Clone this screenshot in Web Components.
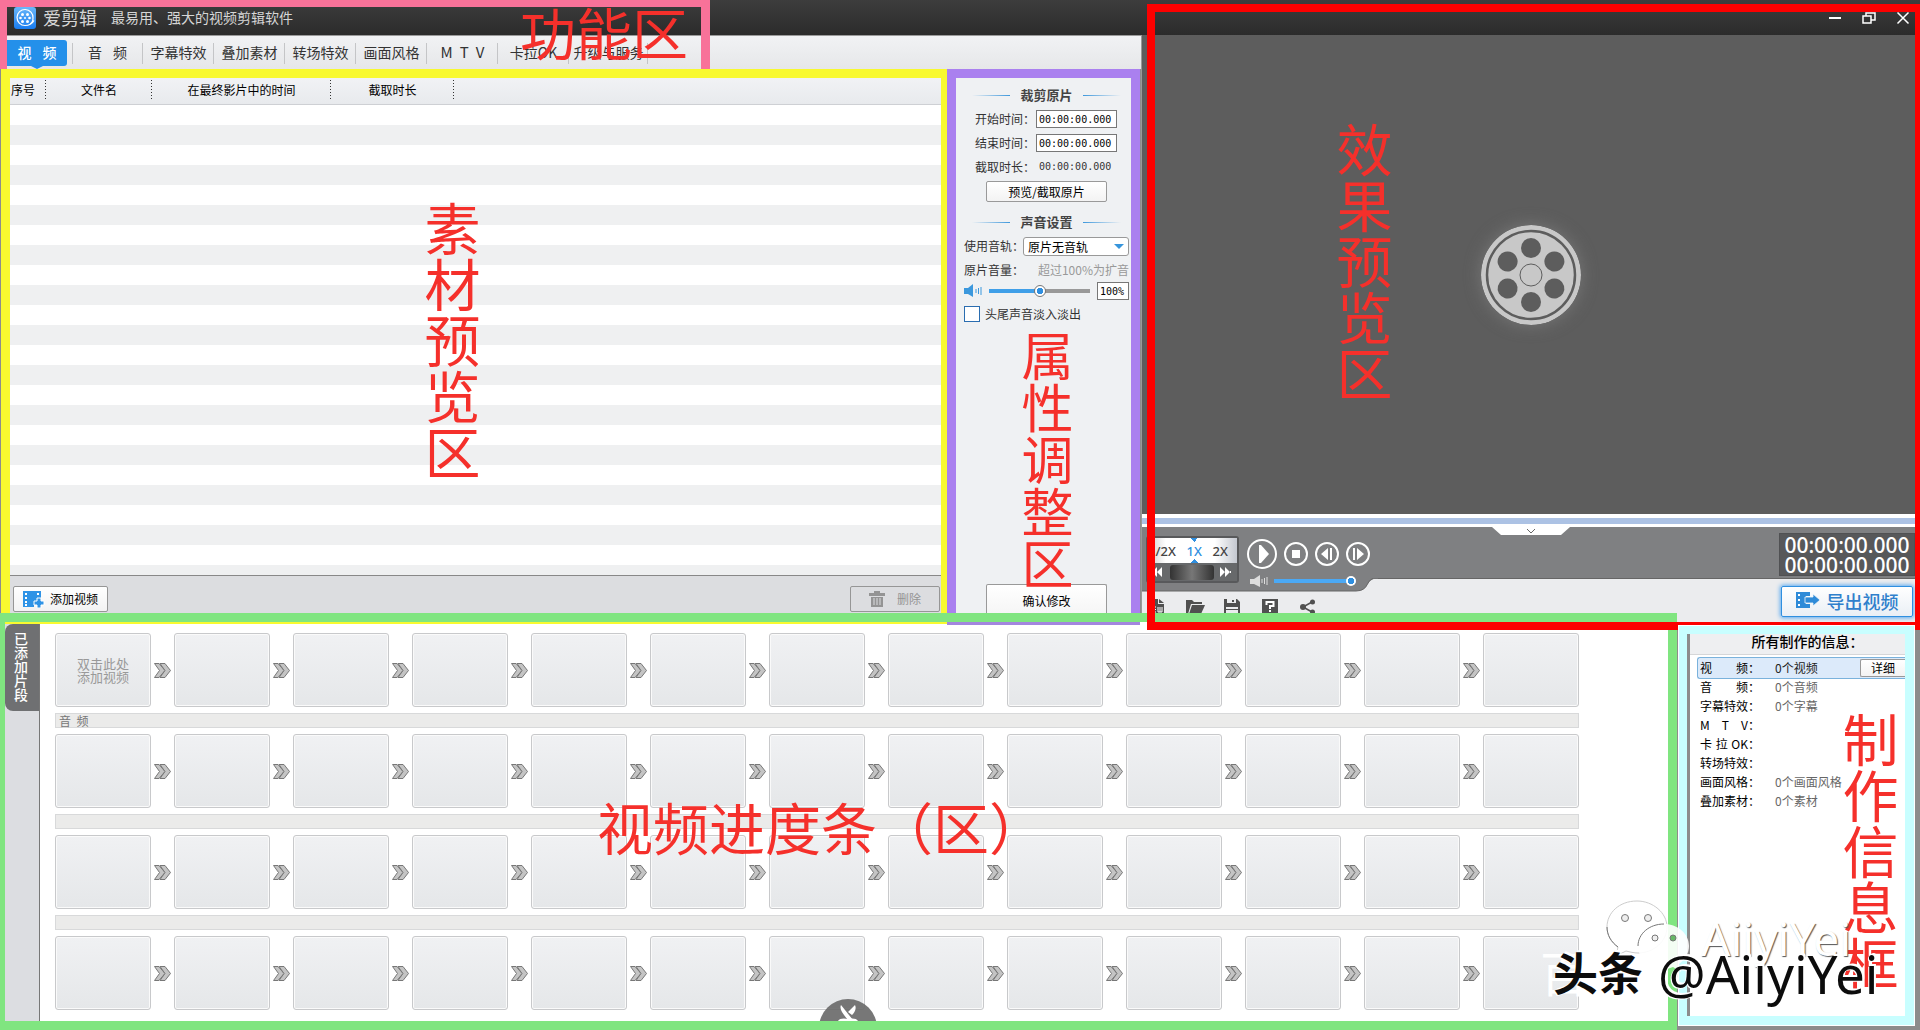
<!DOCTYPE html>
<html lang="zh-CN">
<head>
<meta charset="UTF-8">
<meta name="viewport" content="width=device-width, initial-scale=1.0">
<title>爱剪辑</title>
<style>
    body {
        margin: 0;
        background: #8c8c8c;
        font-family: "Noto Sans CJK SC", sans-serif;
        font-size: 12px;
        line-height: 18px;
        color: #000;
        overflow: hidden;
    }
</style>
</head>
<body>
<editor-app></editor-app>

<script>
class BaseElement extends HTMLElement {
    constructor() {
        super();
        this.myRoot = this.attachShadow({ mode: "open" });
        this.myRoot.innerHTML = `
        <style>
            * {
                box-sizing: border-box;
            }
            button, input, select {
                font: inherit;
                color: inherit;
                margin: 0;
            }
            svg {
                display: block;
            }
        </style>
        ${this.render()}`;
    }
}

// coloured note written over a part of the window
class NoteLabel extends BaseElement {
    render() {
        return `
        <slot></slot>
        <style>
            :host {
                position: absolute;
                z-index: 8;
                font-size: 56px;
                line-height: 56px;
                color: #f5302b;
                white-space: nowrap;
                pointer-events: none;
            }
            :host([vertical]) {
                writing-mode: vertical-rl;
            }
        </style>`;
    }
}

class NoteFrame extends BaseElement {
    render() {
        return `
        <style>
            :host {
                position: absolute;
                z-index: 5;
                box-sizing: border-box;
                border: 0 solid;
                pointer-events: none;
            }
        </style>`;
    }
}

class TitleBar extends BaseElement {
    render() {
        return `
        <svg class="logo" width="22" height="22" viewBox="0 0 22 22">
            <defs><linearGradient id="lg" x2="0" y2="1"><stop stop-color="#6ab8fa"/><stop offset="1" stop-color="#1a7df0"/></linearGradient></defs>
            <rect width="22" height="22" rx="3" fill="url(#lg)"/>
            <path d="M20 13.500C18 17 15 18.500 11 18.500A8 8 0 1 1 19 11C19 14 18 16 16 17" fill="none" stroke="#fff" stroke-width="1.200"/>
            <g fill="#fff"><circle cx="8.500" cy="7.500" r="1.500"/><circle cx="13.500" cy="7.500" r="1.500"/><circle cx="6.500" cy="11" r="1.300"/><circle cx="15.500" cy="11" r="1.300"/><circle cx="11" cy="11" r="1"/><circle cx="8.500" cy="14.500" r="1.500"/><circle cx="13.500" cy="14.500" r="1.500"/></g>
        </svg>
        <h1>爱剪辑</h1>
        <span>最易用、强大的视频剪辑软件</span>
        <nav>
            <button aria-label="最小化"><svg width="14" height="14"><path d="M1 7h12" stroke="#fff" stroke-width="2"/></svg></button>
            <button aria-label="还原"><svg width="14" height="14" fill="none" stroke="#fff" stroke-width="1.500"><path d="M1 5h8v7H1zM4 5V2h9v7H9"/></svg></button>
            <button aria-label="关闭"><svg width="14" height="14"><path d="M1.500 1.500l11 11M12.500 1.500l-11 11" stroke="#fff" stroke-width="1.500"/></svg></button>
        </nav>
        <style>
            :host {
                display: flex;
                align-items: center;
                height: 35px;
                padding: 0 10px 0 14px;
                box-sizing: border-box;
                background: linear-gradient(#3d3d3d, #2b2b2b);
                color: #d6d6d6;
            }
            h1 {
                margin: 0 14px 2px 7px;
                font-size: 18px;
                font-weight: 400;
            }
            span {
                margin-bottom: 2px;
                font-size: 14px;
            }
            nav {
                display: flex;
                gap: 20px;
                margin-left: auto;
            }
            nav button {
                padding: 0;
                border: 0;
                background: none;
            }
        </style>`;
    }
}

class FeatureTabs extends BaseElement {
    render() {
        const tabs = ["视 频", "音 频", "字幕特效", "叠加素材", "转场特效", "画面风格", "M T V", "卡拉OK", "升级与服务"];
        return `
        ${tabs.map((tab, i) => `<button class="${i ? "" : "active"}">${tab.split(" ").map(t => `<span>${t}</span>`).join(" ")}</button>`).join("")}
        <style>
            :host {
                display: flex;
                height: 34px;
                padding: 4px 0 3px 7px;
                box-sizing: border-box;
                border-top: 1px solid #9a9a9a;
                background: linear-gradient(#f1f2f4, #e6e7e9);
                color: #333;
            }
            button {
                display: flex;
                align-items: center;
                justify-content: center;
                gap: 11px;
                width: 71px;
                padding: 0 0 2px;
                border: 0;
                background: linear-gradient(#c4c5c7, #c4c5c7) right / 1px 21px no-repeat;
                font-size: 14px;
                white-space: nowrap;
            }
            button:nth-of-type(7) {
                gap: 7px;
                font-size: 15px;
            }
            button:last-of-type {
                width: 79px;
            }
            .active {
                position: relative;
                width: 60px;
                margin-right: 5px;
                border-radius: 0 3px 3px 0;
                background: #2490ea;
                color: #fff;
                font-weight: 500;
            }
            .active + button {
                background:
                    linear-gradient(#c4c5c7, #c4c5c7) left / 1px 21px no-repeat,
                    linear-gradient(#c4c5c7, #c4c5c7) right / 1px 21px no-repeat;
            }
            .active::after {
                content: "";
                position: absolute;
                bottom: -3px;
                border: 6px solid transparent;
                border-top: 3px solid #2490ea;
                border-bottom: 0;
            }
        </style>`;
    }
}

class MaterialList extends BaseElement {
    render() {
        return `
        <table>
            <colgroup><col class="no"><col class="name"><col class="time"><col class="cut"><col></colgroup>
            <thead><tr><th>序号</th><th>文件名</th><th>在最终影片中的时间</th><th>截取时长</th><th></th></tr></thead>
        </table>
        <div class="rows"></div>
        <footer>
            <button>
                <svg width="22" height="17" viewBox="0 0 22 17"><path d="M0 0h18v8h-4v3h-3v5H0z" fill="#2f93e6"/><path d="M2 2h2v2H2zM2 6h2v2H2zM2 10h2v2H2zM14 2h2v2h-2zM2 13h2v2H2z" fill="#fff"/><path d="M14 7h4v3h3v4h-3v3h-4v-3h-3v-4h3z" fill="#2f93e6" stroke="#fff"/></svg>
                添加视频
            </button>
            <button disabled>
                <svg width="16" height="17" viewBox="0 0 16 17" fill="#949494"><path d="M5 0h6v2h5v3H0V2h5zM2 6h12v10H2z"/><path d="M5 7v7M8 7v7M11 7v7" stroke="#dcdde0"/></svg>
                删除
            </button>
        </footer>
        <style>
            :host {
                display: flex;
                flex-direction: column;
                box-sizing: border-box;
                border: solid #f8f92f;
                border-width: 9px 6px 0 9px;
                margin-left: 1px;
            }
            table {
                width: 100%;
                table-layout: fixed;
                border-spacing: 0;
                border-bottom: 1px solid #ced0d4;
                background: linear-gradient(#f1f2f5, #e8eaed);
            }
            .no { width: 36px; }
            .name { width: 106px; }
            .time { width: 179px; }
            .cut { width: 123px; }
            th {
                height: 26px;
                padding: 0 0 2px;
                font-weight: 400;
                white-space: nowrap;
            }
            th:first-child {
                padding-left: 1px;
                text-align: left;
            }
            th:not(:last-child) {
                background: repeating-linear-gradient(#333 0 1px, transparent 1px 3px) right 2px / 1px 20px no-repeat;
            }
            .rows {
                flex: 1;
                background: repeating-linear-gradient(#fff 0 20px, #eff0f1 20px 40px);
            }
            footer {
                display: flex;
                justify-content: space-between;
                padding: 10px 1px 10px 3px;
                border-top: 1px solid #888;
                background: #dcdde0;
            }
            button {
                display: flex;
                align-items: center;
                gap: 5px;
                height: 26px;
                padding: 0 9px;
                border: 1px solid #969696;
                border-radius: 2px;
                background: linear-gradient(#fff, #f3f3f3);
            }
            button:disabled {
                gap: 12px;
                padding: 0 18px;
                background: none;
                color: #949494;
            }
        </style>`;
    }
}

class PropertyPanel extends BaseElement {
    render() {
        return `
        <h2>裁剪原片</h2>
        <div class="time"><label for="start">开始时间：</label><input id="start" value="00:00:00.000"></div>
        <div class="time"><label for="end">结束时间：</label><input id="end" value="00:00:00.000"></div>
        <div class="time"><label for="length">截取时长：</label><output id="length">00:00:00.000</output></div>
        <button>预览/截取原片</button>
        <h2>声音设置</h2>
        <div class="row track">
            <label for="track">使用音轨：</label>
            <div><select id="track"><option>原片无音轨</option></select></div>
        </div>
        <div class="row"><label for="volume">原片音量：</label><em>超过100%为扩音</em></div>
        <div class="row level">
            <svg width="18" height="14" viewBox="0 0 18 14"><path d="M0 4h4l5-4v13L4 10H0z" fill="#3b98dd"/><path d="M12 5v4M14.500 4v6M17 3v8" stroke="#3b98dd"/></svg>
            <input id="volume" type="range" value="51">
            <input aria-label="音量" class="percent" value="100%">
        </div>
        <div class="check"><input id="fade" type="checkbox"><label for="fade">头尾声音淡入淡出</label></div>
        <button class="confirm">确认修改</button>
        <style>
            :host {
                display: flex;
                flex-direction: column;
                box-sizing: border-box;
                padding: 8px 2px 0 8px;
                border: solid #aa80ef;
                border-width: 9px 9px 0 9px;
                margin-right: 1px;
                background: #eff1f3;
                color: #333;
            }
            h2 {
                display: flex;
                align-items: center;
                justify-content: center;
                gap: 10px;
                height: 18px;
                margin: 0 8px 3px;
                font-size: 13px;
                color: #444;
                white-space: nowrap;
            }
            h2::before, h2::after {
                content: "";
                width: 39px;
                height: 1px;
                background: linear-gradient(90deg, transparent, #3e98dc);
            }
            h2::after {
                background: linear-gradient(270deg, transparent, #3e98dc);
            }
            .time {
                display: flex;
                align-items: center;
                height: 24px;
                padding-left: 11px;
            }
            .time label {
                width: 61px;
                white-space: nowrap;
            }
            .time input, output {
                width: 81px;
                height: 18px;
                padding: 0 2px;
                border: 1px solid #777;
                background: #fff;
                font: 10px/16px "DejaVu Sans Mono", monospace;
                color: #000;
            }
            output {
                border-color: transparent;
                background: none;
                color: #333;
            }
            button {
                width: 121px;
                height: 21px;
                margin: 2px 0 11px 22px;
                padding: 0;
                border: 1px solid #999;
                border-radius: 2px;
                background: linear-gradient(#fff, #f3f3f3);
                color: #000;
            }
            .confirm {
                height: 38px;
                margin: auto 0 0 22px;
                padding-bottom: 6px;
                border-bottom: 0;
            }
            .row {
                display: flex;
                align-items: center;
                justify-content: space-between;
                height: 24px;
                white-space: nowrap;
            }
            .track label {
                width: 59px;
            }
            .track div {
                position: relative;
                flex: 1;
            }
            .track div::after {
                content: "";
                position: absolute;
                right: 5px;
                top: 7px;
                border: 5px solid transparent;
                border-top-color: #3795dc;
                border-bottom: 0;
            }
            select {
                display: block;
                width: 100%;
                height: 19px;
                padding: 0 4px;
                border: 1px solid #999;
                border-radius: 3px;
                appearance: none;
                background: #fff;
                color: #000;
            }
            em {
                font-style: normal;
                color: #999;
            }
            .level {
                height: 18px;
            }
            [type=range] {
                appearance: none;
                width: 101px;
                height: 12px;
                background: linear-gradient(90deg, #3f9fe8 51%, #999 51%) center / 100% 4px no-repeat;
            }
            [type=range]::-webkit-slider-thumb {
                appearance: none;
                width: 12px;
                height: 12px;
                border: 1px solid #777;
                border-radius: 50%;
                background: radial-gradient(#2f8fe0 0 3px, #fff 3px);
            }
            .percent {
                width: 32px;
                height: 18px;
                padding: 0 2px;
                border: 1px solid #777;
                background: #fff;
                font: 10px/16px "DejaVu Sans Mono", monospace;
                color: #000;
            }
            .check {
                display: flex;
                align-items: center;
                gap: 5px;
                margin-top: 5px;
            }
            [type=checkbox] {
                appearance: none;
                width: 16px;
                height: 16px;
                border: 1px solid #2a6db0;
                background: #fff;
            }
        </style>`;
    }
}

class PlayerPane extends BaseElement {
    render() {
        const holes = [0, 60, 120, 180, 240, 300].map(a => `<circle cx="50" cy="23" r="10" transform="rotate(${a} 50 50)" fill="#5d5d5d"/>`).join("");
        return `
        <div class="screen">
            <svg width="100" height="100" viewBox="0 0 100 100">
                <circle cx="50" cy="50" r="50" fill="#c8c8c8"/>
                <circle cx="50" cy="50" r="44" fill="none" stroke="#5d5d5d" stroke-width="2.500"/>
                <circle cx="50" cy="50" r="11" fill="none" stroke="#5d5d5d"/>
                ${holes}
            </svg>
        </div>
        <div class="progress"></div>
        <div class="controls">
            <svg class="curve" width="236" height="14"><path d="M0 0h236v.500C222 .500 229 13 214 13H0z" fill="#7f8082"/><path d="M236 -.500C222 -.500 229 13 214 13H0" fill="none" stroke="#666"/></svg>
            <svg class="fold" width="78" height="9" viewBox="0 0 78 9"><path d="M0 0h78l-9 8H9z" fill="#fff"/><path d="M35 2l4 4 4-4" fill="none" stroke="#666"/></svg>
            <div class="left">
                <div class="deck">
                    <div class="speed">
                        <div><button>1/2X</button><button class="on">1X</button><button>2X</button></div>
                        <div class="jog">
                            <svg width="12" height="10" fill="#fff"><path d="M0 0h1v10H0zM6 0v10L1 5zM11 0v10L6 5z"/></svg>
                            <i></i>
                            <svg width="12" height="10" fill="#fff"><path d="M0 0v10l5-5zM5 0v10l5-5zM10 4h1v2h-1z"/></svg>
                        </div>
                    </div>
                    <div class="transport">
                        <div class="buttons">
                            <button class="play" aria-label="播放"><svg width="30" height="30"><circle cx="15" cy="15" r="14" fill="none" stroke="#fff" stroke-width="2"/><path d="M12 6h2l8 9-8 9h-2z" fill="#fff"/></svg></button>
                            <button aria-label="停止"><svg width="24" height="24"><circle cx="12" cy="12" r="11" fill="none" stroke="#fff" stroke-width="2"/><path d="M8 8h8v8H8z" fill="#fff"/></svg></button>
                            <button aria-label="上一帧"><svg width="24" height="24"><circle cx="12" cy="12" r="11" fill="none" stroke="#fff" stroke-width="2"/><path d="M13 6v12l-7-6zM15 6h2v12h-2z" fill="#fff"/></svg></button>
                            <button aria-label="下一帧"><svg width="24" height="24"><circle cx="12" cy="12" r="11" fill="none" stroke="#fff" stroke-width="2"/><path d="M11 6v12l7-6zM7 6h2v12H7z" fill="#fff"/></svg></button>
                        </div>
                        <div class="sound">
                            <svg width="18" height="12"><path d="M0 4h4l6-4v12L4 9H0z" fill="#ddd"/><path d="M12 4v4M14.500 3v6M17 2v8" stroke="#ddd"/></svg>
                            <input type="range" value="100" aria-label="播放音量">
                        </div>
                    </div>
                </div>
                <div class="tools">
                    <button aria-label="新建"><svg width="17" height="17"><path d="M2 0h8v5h6v10H2z" fill="#505050"/><path d="M11 0l5 4h-5z" fill="#505050"/><path d="M0 8v5M0 8l3 5V8M5 8v5h3M5 8h3M5 10.500h3M10 8v5h4V8M12 8v5" fill="none" stroke="#fff"/></svg></button>
                    <button aria-label="打开"><svg width="20" height="16"><path d="M0 1h6l2 2h8v2H5L2 15H0z" fill="#505050"/><path d="M6 6h13l-4 9H3z" fill="#505050"/></svg></button>
                    <button aria-label="保存"><svg width="16" height="16"><path d="M0 0h13l3 3v12H0z" fill="#505050"/><path d="M3 0h9v4H3zM2 8h12v2H2zM2 11h12v4H2z" fill="#ebecee"/><path d="M8 1h2v2H8z" fill="#505050"/></svg></button>
                    <button aria-label="帮助"><svg width="16" height="16"><path d="M0 0h16v15H0z" fill="#505050"/><path d="M4.500 6V3h7v4H8v3M8 11v2" fill="none" stroke="#fff" stroke-width="2"/></svg></button>
                    <button aria-label="分享"><svg width="16" height="16" fill="#505050"><path d="M12 3L3 8l9 5" fill="none" stroke="#505050" stroke-width="1.500"/><circle cx="12.500" cy="3" r="2.500"/><circle cx="3" cy="8" r="3"/><circle cx="12.500" cy="13" r="2.500"/></svg></button>
                </div>
            </div>
            <div class="right">
                <div class="clock"><time>00:00:00.000</time><time>00:00:00.000</time></div>
                <button>
                    <svg width="24" height="17" viewBox="0 0 24 17"><path d="M0 0h14v4h-4v8h4v4H0z" fill="#2f8bd8"/><path d="M2 2h2v2H2zM2 7h2v2H2zM2 12h2v2H2z" fill="#fff"/><path d="M9 5h8V2l7 6-7 6v-3H9z" fill="#2f8bd8" stroke="#f4f7fa" stroke-width=".8"/></svg>
                    导出视频
                </button>
            </div>
        </div>
        <style>
            :host {
                display: flex;
                flex-direction: column;
                border-left: 1px solid #999;
                box-sizing: border-box;
            }
            button {
                padding: 0;
                border: 0;
                background: none;
            }
            .screen {
                display: flex;
                flex: 1;
                align-items: center;
                justify-content: center;
                background: #5d5d5d;
            }
            .screen svg {
                border-radius: 50%;
                box-shadow: 0 0 16px #777;
            }
            .progress {
                height: 13px;
                box-sizing: border-box;
                border: solid #fff;
                border-width: 4px 0 3px;
                background: #acc2e4;
            }
            .controls {
                position: relative;
                display: flex;
                justify-content: space-between;
                background: linear-gradient(#7f8082 51px, #666 51px 52px, #ebecee 52px);
            }
            .curve {
                position: absolute;
                left: 0;
                top: 51px;
            }
            .fold {
                position: absolute;
                left: calc(50% - 39px);
                top: 0;
            }
            .left {
                position: relative;
            }
            .deck {
                display: flex;
                gap: 8px;
                height: 65px;
                padding: 9px 0 0 4px;
            }
            .speed {
                width: 93px;
                height: 47px;
                border: 2px solid #58595b;
                border-radius: 3px;
                background: #67696b;
            }
            .speed div {
                display: flex;
                align-items: center;
                justify-content: space-between;
                height: 25px;
                padding: 0 9px 0 0;
                background: linear-gradient(90deg, #ccc, #fff 20% 75%, #c4c8d0);
                font: 500 13px/18px "Noto Sans", sans-serif;
                color: #444;
            }
            .speed .on {
                height: 25px;
                background:
                    conic-gradient(from 315deg at 50% 4px, #2f8fe0 90deg, transparent 0) top / 8px 4px no-repeat,
                    conic-gradient(from 135deg at 50% 0, #2f8fe0 90deg, transparent 0) bottom / 8px 4px no-repeat;
                color: #2f8fe0;
            }
            .speed .jog {
                height: 18px;
                padding: 0 5px 0 3px;
                background: #67696b;
            }
            .jog i {
                width: 44px;
                height: 15px;
                border-radius: 3px;
                background: linear-gradient(90deg, #333, #777 50%, #333);
            }
            .transport {
                padding-top: 3px;
            }
            .buttons {
                display: flex;
                align-items: center;
                gap: 7px;
            }
            .sound {
                display: flex;
                align-items: center;
                gap: 6px;
                height: 24px;
                padding-left: 3px;
            }
            .sound input {
                appearance: none;
                width: 82px;
                height: 10px;
                margin: 0;
                background: linear-gradient(#4ba9f5, #4ba9f5) center / 100% 4px no-repeat;
            }
            .sound input::-webkit-slider-thumb {
                appearance: none;
                width: 10px;
                height: 10px;
                border-radius: 50%;
                background: radial-gradient(#2f8fe0 0 3px, #fff 3px);
            }
            .tools {
                display: flex;
                gap: 18px;
                padding: 7px 0 7px 6px;
            }
            .tools button {
                width: 20px;
            }
            .tools svg {
                height: 16px;
            }
            .right {
                display: flex;
                flex-direction: column;
                gap: 10px;
                width: 136px;
                margin-right: 5px;
                padding-top: 6px;
            }
            .clock {
                display: flex;
                flex-direction: column;
                align-items: center;
                height: 43px;
                padding-top: 1px;
                border: 1px solid #505153;
                background: #57585a;
                font: 500 21px/20px "Noto Sans", sans-serif;
                color: #fff;
            }
            .right button {
                display: flex;
                align-items: center;
                justify-content: center;
                gap: 7px;
                height: 31px;
                margin: 0 2px;
                padding-bottom: 2px;
                border: 1px solid #2f8fe0;
                border-radius: 2px;
                background: linear-gradient(#fff, #eaeff5);
                box-shadow: 0 0 4px 1px #58a9f0;
                font-size: 18px;
                font-weight: 500;
                color: #2f80cc;
            }
        </style>`;
    }
}

class ClipCell extends BaseElement {
    render() {
        return `
        <slot></slot>
        <style>
            :host {
                display: flex;
                align-items: center;
                justify-content: center;
                box-sizing: border-box;
                width: 96px;
                height: 74px;
                border: 1px solid #c8c9cb;
                border-radius: 3px;
                box-shadow: inset 0 0 0 1px #fafafa;
                background: linear-gradient(#f0f1f3, #e5e7e9);
                font-size: 13px;
                line-height: 13px;
                text-align: center;
                color: #999;
            }
        </style>`;
    }
}

class ClipTimeline extends BaseElement {
    render() {
        const arrow = `<svg width="17" height="15" viewBox="0 0 17 15" fill="#c4c4c4" stroke="#777"><path d="M.500 .500H5l6 7-6 7H.500l5-7z"/><path d="M6 .500h5l5.500 7-5.500 7H6l5-7z"/></svg>`;
        const row = first => Array.from({ length: 13 }, (_, i) => `<clip-cell>${i ? "" : first}</clip-cell>`).join(arrow);
        return `
        <aside><h2>已添加片段</h2></aside>
        <main>
            <div class="clips">${row("双击此处<br>添加视频")}</div>
            <div class="bar">音&nbsp; 频</div>
            <div class="clips">${row("")}</div>
            <div class="bar"></div>
            <div class="clips">${row("")}</div>
            <div class="bar"></div>
            <div class="clips">${row("")}</div>
        </main>
        <svg class="cut" width="58" height="22" viewBox="0 0 58 22"><circle cx="29" cy="29" r="29" fill="#686868" fill-opacity=".9"/><path d="M22 6c-2 4 2 9 7 15h5zM36 6c2 4-1 8-3 10l-4-3z" fill="#fff"/><path d="M19 22c1-3 7-3 10-2 3-1 9-1 10 2z" fill="#fff"/></svg>
        <style>
            :host {
                position: relative;
                display: flex;
                padding: 2px 0 0 5px;
                overflow: hidden;
                background: #fff;
            }
            aside {
                width: 35px;
                box-sizing: border-box;
                border-right: 1px solid #777;
                background: #dcdde1;
            }
            h2 {
                width: 34px;
                margin: 0;
                padding: 8px 0 9px;
                border-radius: 8px 0 0 8px;
                background: #6f7072;
                color: #fff;
                font-size: 14px;
                font-weight: 500;
                line-height: 36px;
                writing-mode: vertical-rl;
            }
            main {
                display: flex;
                flex-direction: column;
                gap: 6px;
                padding: 9px 15px 20px;
            }
            .clips {
                display: flex;
                align-items: center;
                gap: 3px;
            }
            .bar {
                height: 15px;
                border: 1px solid #d8d9da;
                background: #ebebea;
                padding-left: 3px;
                line-height: 13px;
                color: #777;
            }
            .cut {
                position: absolute;
                left: 819px;
                bottom: 9px;
            }
        </style>`;
    }
}

class ProjectInfo extends BaseElement {
    render() {
        const rows = [
            ["视 频：", "0个视频"],
            ["音 频：", "0个音频"],
            ["字幕特效：", "0个字幕"],
            ["M T V：", ""],
            ["卡 拉 OK：", ""],
            ["转场特效：", ""],
            ["画面风格：", "0个画面风格"],
            ["叠加素材：", "0个素材"]
        ];
        return `
        <section>
            <h2>所有制作的信息：</h2>
            <dl>
                ${rows.map(([name, value], i) => `
                <div class="${i ? "" : "on"}">
                    <dt>${name.split(" ").map(t => `<span>${t}</span>`).join(" ")}</dt><dd>${value}</dd>
                    ${i ? "" : "<button>详细</button>"}
                </div>`).join("")}
            </dl>
        </section>
        <style>
            :host {
                display: block;
                box-sizing: border-box;
                margin: 4px 6px 5px 2px;
                border: solid #c8feff;
                border-width: 8px 9px 9px 8px;
                outline: 1px solid #fff;
            }
            section {
                height: 100%;
                border-left: 3px solid #8c8c8c;
                background: #fff;
            }
            h2 {
                height: 21px;
                margin: 0 0 2px;
                padding-left: 20px;
                border-bottom: 1px solid #d5d6d8;
                background: #eeeff1;
                font-size: 14px;
                font-weight: 500;
                line-height: 14px;
                text-align: center;
            }
            dl {
                margin: 0;
            }
            dl div {
                display: flex;
                align-items: center;
                height: 19px;
                padding-left: 10px;
            }
            dl .on {
                height: 22px;
                margin: 0 0 -2px 7px;
                padding-left: 2px;
                border: 1px solid #7ab2dc;
                border-right: 0;
                border-radius: 3px 0 0 3px;
                background: #dceafa;
            }
            dt {
                display: flex;
                justify-content: space-between;
                width: 60px;
                white-space: nowrap;
            }
            dd {
                margin: 0 0 0 15px;
                color: #666;
                white-space: nowrap;
            }
            .on dd {
                color: #222;
            }
            button {
                width: 45px;
                height: 18px;
                margin-left: auto;
                padding: 0;
                border: 1px solid #999;
                border-right: 0;
                border-radius: 2px 0 0 2px;
                background: linear-gradient(#fff, #f3f3f3);
                line-height: 14px;
            }
        </style>`;
    }
}

class WaterMark extends BaseElement {
    render() {
        return `
        <svg width="86" height="74" viewBox="0 0 86 74">
            <path d="M31 1C13 1 1 13 1 27c0 8 4 15 11 20l-2 9 10-5c4 1 8 2 12 2 16 0 29-12 29-26S47 1 31 1z" fill="#fff" stroke="#ccc"/>
            <path d="M58 24c-15 0-26 10-26 22s11 23 26 23c3 0 6-1 9-2l8 5-2-8c6-4 10-11 10-18 0-12-11-22-25-22z" fill="#fff" fill-opacity=".9"/>
            <path d="M32 46c0-12 11-22 26-22M1 27c0 8 4 15 11 20" fill="none" stroke="#777"/>
            <g fill="#eee" stroke="#777"><circle cx="19" cy="18" r="3.500"/><circle cx="42" cy="18" r="3.500"/><circle cx="49" cy="38" r="3"/><circle cx="67" cy="38" r="3" fill="#66b866"/></g>
        </svg>
        <span class="pale">AiiyiYei</span>
        <span class="hidden">百</span>
        <span class="strong"><b>头条</b><i>@AiiyiYei</i></span>
        <style>
            :host {
                position: absolute;
                z-index: 9;
                right: 24px;
                bottom: 26px;
                width: 356px;
                height: 104px;
                color: #fff;
                font-family: "Noto Sans", "Noto Sans CJK SC", sans-serif;
                white-space: nowrap;
                pointer-events: none;
            }
            svg, span {
                position: absolute;
            }
            svg {
                left: 66px;
                top: 0;
            }
            .pale {
                left: 161px;
                top: 8px;
                font-size: 46px;
                line-height: 60px;
                text-shadow: 1px 1px 1px #555;
            }
            .hidden {
                left: 0;
                top: 44px;
                font-size: 48px;
                line-height: 60px;
            }
            .strong {
                display: flex;
                gap: 15px;
                left: 13px;
                top: 44px;
                font-size: 45px;
                line-height: 60px;
                color: #0c0c0c;
                text-shadow: 2px -2px 0 #fff, -1px 1px 0 #fff;
            }
            i {
                font-size: 53px;
                font-style: normal;
            }
        </style>`;
    }
}

class EditorApp extends BaseElement {
    render() {
        return `
        <title-bar></title-bar>
        <div class="top">
            <div class="work">
                <feature-tabs></feature-tabs>
                <div class="panels">
                    <material-list></material-list>
                    <property-panel></property-panel>
                </div>
            </div>
            <div class="player">
                <player-pane></player-pane>
                <note-frame class="red"></note-frame>
            </div>
        </div>
        <div class="bottom">
            <div class="timeline">
                <clip-timeline></clip-timeline>
                <note-frame class="green"></note-frame>
            </div>
            <project-info></project-info>
        </div>
        <note-frame class="pink"></note-frame>
        <note-label class="l1">功能区</note-label>
        <note-label class="l2" vertical>素材预览区</note-label>
        <note-label class="l3" vertical>属性调整区</note-label>
        <note-label class="l4" vertical>效果预览区</note-label>
        <note-label class="l5">视频进度条（区）</note-label>
        <note-label class="l6" vertical>制作信息框</note-label>
        <water-mark></water-mark>
        <style>
            :host {
                position: relative;
                display: flex;
                flex-direction: column;
                min-height: 100vh;
            }
            .top {
                display: grid;
                grid-template-columns: minmax(0, 1141fr) minmax(0, 779fr);
                flex: 1;
            }
            .work {
                display: flex;
                flex-direction: column;
            }
            .panels {
                display: grid;
                grid-template-columns: 1fr 194px;
                flex: 1;
            }
            .player {
                position: relative;
                display: grid;
            }
            .bottom {
                display: grid;
                grid-template-columns: minmax(0, 1fr) 243px;
            }
            .timeline {
                position: relative;
                display: grid;
                background: #fff;
            }
            project-info {
                position: relative;
                z-index: 7;
            }
            .red {
                z-index: 6;
                inset: -31px 0 -8px 6px;
                border-color: #fd0000;
                border-width: 8px 5px 8px 8px;
            }
            .green {
                inset: -9px 0 0 0;
                border-color: #80e580;
                border-width: 9px 9px 9px 5px;
            }
            .timeline::before {
                content: "";
                position: absolute;
                z-index: 4;
                left: 5px;
                top: 0;
                width: 942px;
                height: 2px;
                background: #f8f92f;
            }
            .timeline::after {
                content: "";
                position: absolute;
                z-index: 4;
                left: 947px;
                top: 0;
                width: 193px;
                height: 3px;
                background: #a386de;
            }
            .pink {
                left: 0;
                top: 0;
                width: 710px;
                height: 69px;
                border-color: #f87299;
                border-width: 7px 9px 0 7px;
            }
            .l1 { left: 520px; top: 3px; }
            .l2 { left: 424px; top: 201px; }
            .l3 { left: 1021px; top: 330px; font-size: 52px; line-height: 52px; }
            .l4 { left: 1336px; top: 122px; }
            .l5 { left: 597px; top: 798px; }
            .l6 { left: 1842px; top: 712px; }
        </style>`;
    }
}

window.customElements.define("note-label", NoteLabel);
window.customElements.define("note-frame", NoteFrame);
window.customElements.define("title-bar", TitleBar);
window.customElements.define("feature-tabs", FeatureTabs);
window.customElements.define("material-list", MaterialList);
window.customElements.define("property-panel", PropertyPanel);
window.customElements.define("player-pane", PlayerPane);
window.customElements.define("clip-cell", ClipCell);
window.customElements.define("clip-timeline", ClipTimeline);
window.customElements.define("project-info", ProjectInfo);
window.customElements.define("water-mark", WaterMark);
window.customElements.define("editor-app", EditorApp);
</script>
</body>
</html>
